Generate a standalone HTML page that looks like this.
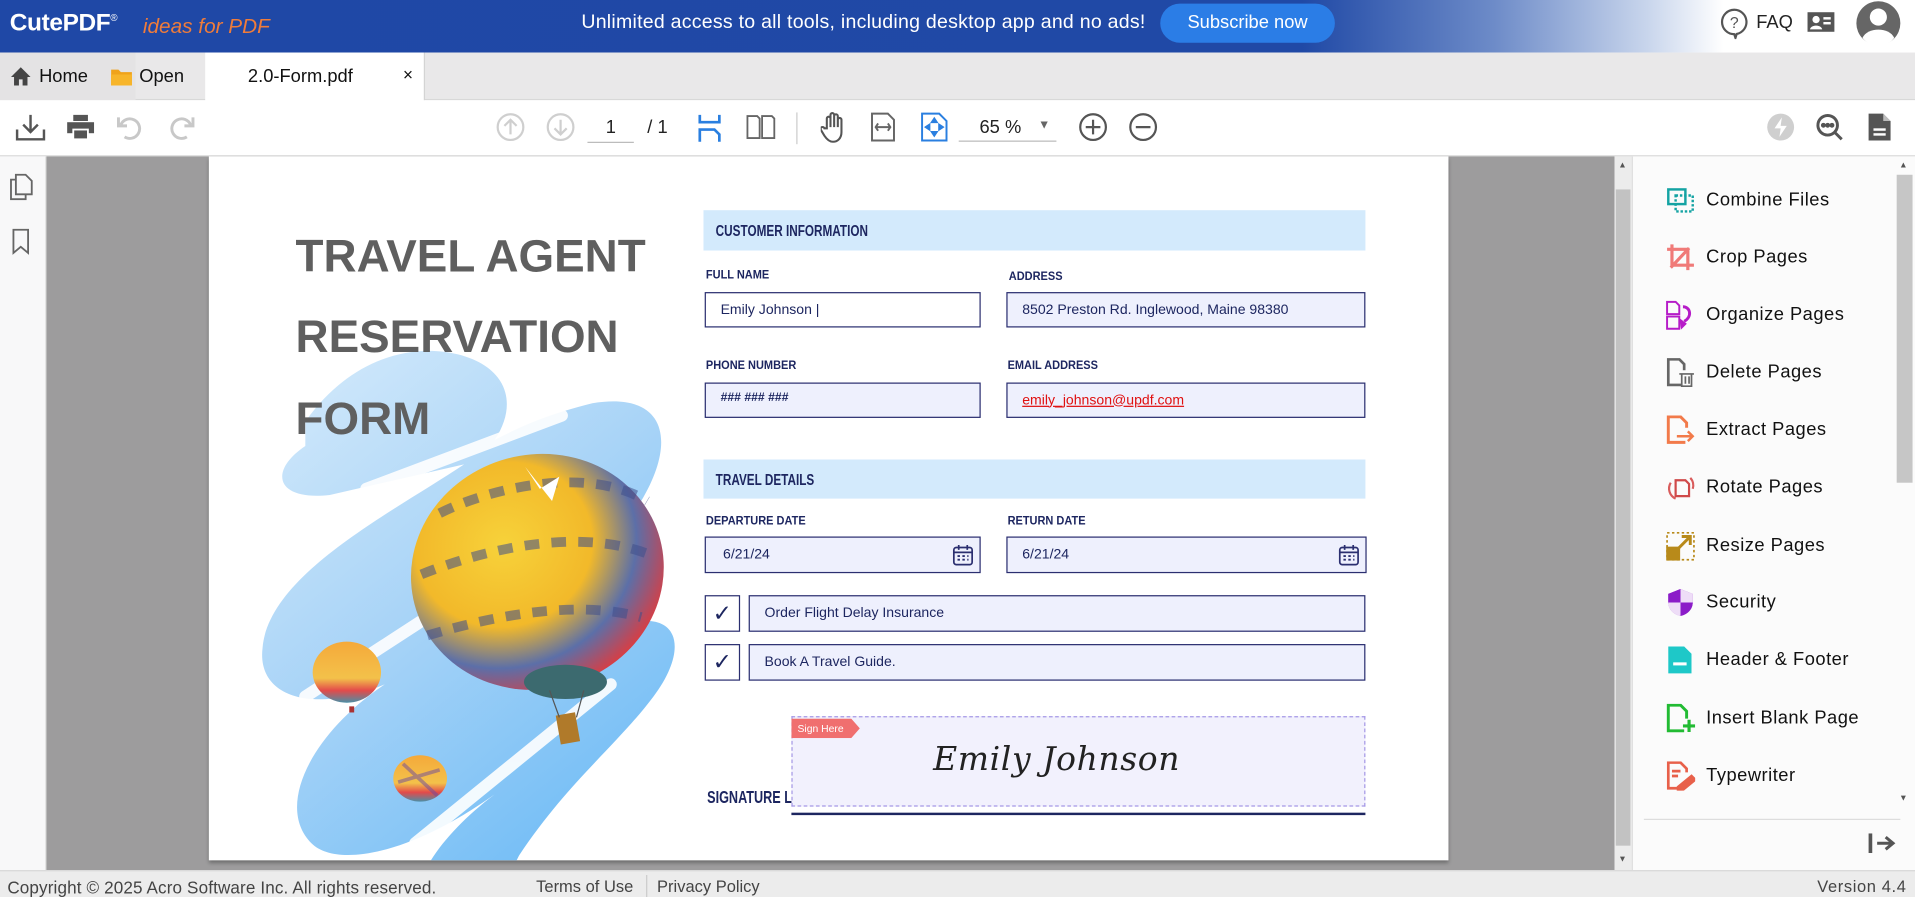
<!DOCTYPE html>
<html><head><meta charset="utf-8"><style>
*{margin:0;padding:0;box-sizing:border-box}
html,body{width:1915px;height:897px;overflow:hidden;background:#fff;font-family:"Liberation Sans",Arial,sans-serif}
#w{position:absolute;left:0;top:0;width:1568px;height:734px;transform:scale(1.22130,1.22207);transform-origin:0 0}
.a{position:absolute}
.nar{font-weight:bold;color:#1d2660}
.sx{display:inline-block;transform:scaleX(.74);transform-origin:0 50%;white-space:nowrap}
.lbl{position:absolute;font-size:10px;font-weight:bold;color:#1d2660}
.box{position:absolute;border:1.5px solid #2b2f70;background:#eef0fd;font-size:11.5px;color:#1d2660;padding-left:12px;display:flex;align-items:center}
.band{position:absolute;left:576px;width:542px;background:#d3eafc;font-size:13px;padding-left:10px;display:flex;align-items:center}
.ti{position:absolute;left:1397px;font-size:15px;color:#111;letter-spacing:.4px}
.ic{position:absolute;left:1364px;width:24px;height:24px}
</style></head><body><div id="w">

<!-- header -->
<div class="a" style="left:0;top:0;width:1568px;height:43px;background:linear-gradient(90deg,#1f48a6 0%,#2049a6 68%,#6d8bc8 78%,#c8d5ec 86%,#fff 90%,#fff 100%)"></div>
<div class="a" style="left:8px;top:8px;color:#fff;font-size:20px;font-weight:bold;letter-spacing:-.3px">CutePDF<sup style="font-size:8px;font-weight:normal">®</sup></div>
<div class="a" style="left:117px;top:12px;color:#f07c3a;font-size:17px;font-style:italic">ideas for PDF</div>
<div class="a" style="left:476px;top:10px;color:#fff;font-size:16px;letter-spacing:.2px">Unlimited access to all tools, including desktop app and no ads!</div>
<div class="a" style="left:950px;top:3px;width:143px;height:32px;border-radius:16px;background:#2b7de6;color:#fff;font-size:15px;text-align:center;line-height:32px">Subscribe now</div>
<svg class="a" style="left:1408px;top:6px" width="24" height="26" viewBox="0 0 24 26"><path d="M12 2a10 10 0 1 0 0 20l1 3 1-3.2A10 10 0 0 0 12 2z" fill="none" stroke="#555" stroke-width="1.8"/><text x="12" y="17" font-size="13" text-anchor="middle" fill="#555" font-family="Liberation Sans">?</text></svg>
<div class="a" style="left:1438px;top:10px;font-size:15px;color:#222">FAQ</div>
<svg class="a" style="left:1479px;top:9px" width="24" height="18"><rect x="1" y="1" width="22" height="16" fill="#555"/><circle cx="8" cy="7" r="3" fill="#fff"/><path d="M3 15c1-4 9-4 10 0z" fill="#fff"/><rect x="14" y="5" width="6" height="2" fill="#fff"/><rect x="14" y="9" width="6" height="2" fill="#fff"/></svg>
<svg class="a" style="left:1519px;top:0" width="38" height="38"><circle cx="19" cy="19" r="18" fill="#666"/><circle cx="19" cy="14" r="7" fill="#fff"/><path d="M6 31c4-9 22-9 26 0a16 16 0 0 1-26 0z" fill="#fff"/></svg>

<!-- tab bar -->
<div class="a" style="left:0;top:43px;width:1568px;height:39px;background:#e9e8e9;border-bottom:1px solid #d8d8d8"></div>
<div class="a" style="left:0;top:43px;width:111px;height:39px;background:#e4e3e4"></div>
<div class="a" style="left:168px;top:43px;width:180px;height:40px;background:#fff;border-right:1px solid #d4d4d4"></div>
<svg class="a" style="left:8px;top:54px" width="18" height="17"><path d="M9 1L1 9h2.5v7h4v-5h3v5h4V9H17z" fill="#444"/></svg>
<div class="a" style="left:32px;top:54px;font-size:15px;color:#111">Home</div>
<svg class="a" style="left:90px;top:55px" width="19" height="16"><path d="M1 2h6l2 2h9v11H1z" fill="#f0a31a"/><path d="M1 6h17v9H1z" fill="#f7b52a"/></svg>
<div class="a" style="left:114px;top:54px;font-size:15px;color:#111">Open</div>
<div class="a" style="left:203px;top:54px;font-size:15px;color:#111">2.0-Form.pdf</div>
<div class="a" style="left:330px;top:53px;font-size:14px;color:#111">×</div>

<!-- toolbar -->
<div class="a" style="left:0;top:82px;width:1568px;height:46px;background:#fff;border-bottom:1px solid #d9d9d9"></div>
<svg class="a" style="left:12px;top:92px" width="26" height="24" fill="none" stroke="#555" stroke-width="2"><path d="M13 2v14M7 10l6 6 6-6M2 14v8h22v-8"/></svg>
<svg class="a" style="left:54px;top:93px" width="24" height="22"><rect x="6" y="1" width="12" height="5" fill="#555"/><rect x="1" y="7" width="22" height="9" fill="#555"/><rect x="6" y="13" width="12" height="8" fill="#555" stroke="#fff" stroke-width="1.5"/></svg>
<svg class="a" style="left:95px;top:93px" width="24" height="22" fill="none" stroke="#c8c8c8" stroke-width="2.4"><path d="M4 9a8 8 0 1 1 3 10M2 3v7h7"/></svg>
<svg class="a" style="left:136px;top:93px" width="24" height="22" fill="none" stroke="#c8c8c8" stroke-width="2.4"><path d="M20 9a8 8 0 1 0-3 10M22 3v7h-7"/></svg>
<svg class="a" style="left:406px;top:92px" width="24" height="24" fill="none" stroke="#cfcfcf" stroke-width="1.8"><circle cx="12" cy="12" r="10.5"/><path d="M12 18V6M7 11l5-5 5 5"/></svg>
<svg class="a" style="left:447px;top:92px" width="24" height="24" fill="none" stroke="#cfcfcf" stroke-width="1.8"><circle cx="12" cy="12" r="10.5"/><path d="M12 6v12M7 13l5 5 5-5"/></svg>
<div class="a" style="left:481px;top:116px;width:38px;border-bottom:1px solid #bbb"></div>
<div class="a" style="left:496px;top:96px;font-size:15px;color:#222">1</div>
<div class="a" style="left:530px;top:96px;font-size:15px;color:#222">/ 1</div>
<svg class="a" style="left:571px;top:93px" width="20" height="24" fill="none" stroke="#2a7fe0" stroke-width="2.2"><path d="M2 1v6h16V1M2 23V13h12l4 4v6"/></svg>
<svg class="a" style="left:611px;top:94px" width="24" height="20" fill="none" stroke="#666" stroke-width="1.5"><path d="M1 1h8l2 2v16H1zM13 1h8l2 2v16H13z"/></svg>
<div class="a" style="left:652px;top:92px;width:1px;height:26px;background:#ccc"></div>
<svg class="a" style="left:672px;top:91px" width="22" height="26" fill="none" stroke="#555" stroke-width="1.7"><path d="M5 14V6a1.5 1.5 0 0 1 3 0v7V3a1.5 1.5 0 0 1 3 0v10V4a1.5 1.5 0 0 1 3 0v9V7a1.5 1.5 0 0 1 3 0v10c0 5-3 8-7 8-3 0-5-2-7-5l-3-5a1.5 1.5 0 0 1 3-1z"/></svg>
<svg class="a" style="left:713px;top:92px" width="20" height="24" fill="none" stroke="#666" stroke-width="1.6"><path d="M1 1h13l5 5v17H1z"/><path d="M4 12h12M6 9l-2 3 2 3M14 9l2 3-2 3"/></svg>
<svg class="a" style="left:754px;top:92px" width="22" height="24" fill="none" stroke="#2a7fe0" stroke-width="1.6"><path d="M1 1h14l6 6v16H1z"/><path d="M11 5l-2 3h4zM11 19l-2-3h4zM4 12l3-2v4zM18 12l-3-2v4z" fill="#2a7fe0"/></svg>
<div class="a" style="left:802px;top:96px;font-size:15px;color:#222">65 %</div>
<div class="a" style="left:850px;top:97px;font-size:10px;color:#666">▼</div>
<div class="a" style="left:785px;top:115px;width:80px;border-bottom:1px solid #bbb"></div>
<svg class="a" style="left:883px;top:92px" width="24" height="24" fill="none" stroke="#555" stroke-width="1.8"><circle cx="12" cy="12" r="10.5"/><path d="M12 6v12M6 12h12"/></svg>
<svg class="a" style="left:924px;top:92px" width="24" height="24" fill="none" stroke="#555" stroke-width="1.8"><circle cx="12" cy="12" r="10.5"/><path d="M6 12h12"/></svg>
<svg class="a" style="left:1446px;top:92px" width="24" height="24"><circle cx="12" cy="12" r="11" fill="#cfcfcf"/><path d="M13 4l-6 9h5l-1 7 6-9h-5z" fill="#fff"/></svg>
<svg class="a" style="left:1486px;top:92px" width="24" height="24" fill="none" stroke="#555" stroke-width="2.4"><circle cx="10.5" cy="10.5" r="8"/><path d="M16 16l6 6"/><circle cx="7" cy="10.5" r=".8" fill="#555"/><circle cx="10.5" cy="10.5" r=".8" fill="#555"/><circle cx="14" cy="10.5" r=".8" fill="#555"/></svg>
<svg class="a" style="left:1529px;top:92px" width="20" height="24"><path d="M1 1h12l6 6v16H1z" fill="#555"/><path d="M13 1v6h6" fill="#fff" opacity=".6"/><rect x="5" y="13" width="10" height="2" fill="#fff"/><rect x="5" y="17" width="10" height="2" fill="#fff"/></svg>

<!-- left sidebar -->
<div class="a" style="left:0;top:128px;width:38px;height:584px;background:#f8f8f9;border-right:1px solid #e0e0e0"></div>
<svg class="a" style="left:8px;top:142px" width="20" height="22" fill="none" stroke="#666" stroke-width="1.5"><path d="M5 1h8l5 5v11H5z"/><path d="M5 5H1v16h12v-4"/></svg>
<svg class="a" style="left:10px;top:187px" width="14" height="22" fill="none" stroke="#666" stroke-width="1.5"><path d="M1 1h12v19l-6-5-6 5z"/></svg>

<!-- viewer -->
<div class="a" style="left:38px;top:128px;width:1284px;height:584px;background:#9d9c9d"></div>
<div class="a" style="left:171px;top:128px;width:1015px;height:576px;background:#fff;box-shadow:0 2px 3px rgba(0,0,0,.3);overflow:hidden">
 <svg class="a" style="left:0;top:0" width="1015" height="576" viewBox="171 128 1015 576">
  <defs>
   <linearGradient id="bg" x1="0" y1="0" x2="0.6" y2="1"><stop offset="0" stop-color="#d6ebfb"/><stop offset=".5" stop-color="#a9d4f7"/><stop offset="1" stop-color="#72bdf6"/></linearGradient>
   <radialGradient id="bb" cx=".4" cy=".35" r=".7"><stop offset="0" stop-color="#f7d23a"/><stop offset=".5" stop-color="#f2b92a"/><stop offset=".75" stop-color="#5c6fa8"/><stop offset="1" stop-color="#e63838"/></radialGradient>
   <linearGradient id="sb" x1="0" y1="0" x2="0" y2="1"><stop offset="0" stop-color="#f5a93a"/><stop offset=".6" stop-color="#f3c14a"/><stop offset=".8" stop-color="#e34a4a"/><stop offset="1" stop-color="#4a8fa6"/></linearGradient>
  </defs>
  <path d="M250 365c-30 20-25 45 20 40l110-25c-60 40-160 90-165 150-5 40 40 55 100 30-60 40-90 100-60 130 20 20 80 10 150-40-40 30-70 70-60 90l60 0 20-40c40-60 80-90 110-130 30-40 20-70-20-60 30-40 10-60-30-40l40-60c30-50 20-90-40-80-40 10-60 20-80 30 20-30 10-60-30-70-40-10-90 5-125 55z" fill="url(#bg)"/>
  <path d="M300 400l160-60M250 570l200-130M340 690l160-130" stroke="#fff" stroke-width="10" stroke-linecap="round" opacity=".9"/>
  <ellipse cx="440" cy="468" rx="104" ry="96" fill="url(#bb)" transform="rotate(-15 440 468)"/>
  <path d="M360 420c40-20 120-40 170-10M345 470c50-20 130-40 190-15M350 520c50-15 120-30 175-15" stroke="#3f4e8a" stroke-width="8" fill="none" opacity=".55" stroke-dasharray="12 10"/>
  <path d="M430 382l12 18 16-10-6 20z" fill="#fff"/>
  <ellipse cx="463" cy="558" rx="34" ry="14" fill="#3c6a6f"/>
  <rect x="457" y="584" width="16" height="24" fill="#b07a2a" transform="rotate(-10 465 596)"/>
  <path d="M450 565l8 22M478 565l-6 22" stroke="#555" stroke-width="1"/>
  <ellipse cx="284" cy="550" rx="28" ry="25" fill="url(#sb)"/>
  <rect x="286" y="578" width="4" height="5" fill="#a33"/>
  <ellipse cx="344" cy="637" rx="22" ry="19" fill="url(#sb)"/>
  <path d="M330 625l28 26M326 640l34-10" stroke="#6b4aa0" stroke-width="3" opacity=".5"/>
  <text x="242" y="222" font-family="Liberation Sans" font-weight="bold" font-size="37.5" fill="#5f5f5f">TRAVEL AGENT</text>
  <text x="242" y="288" font-family="Liberation Sans" font-weight="bold" font-size="37.5" fill="#5f5f5f">RESERVATION</text>
  <text x="242" y="355" font-family="Liberation Sans" font-weight="bold" font-size="37.5" fill="#5f5f5f">FORM</text>
 </svg>
</div>

<!-- form -->
<div class="band nar" style="top:172px;height:33px"><span class="sx">CUSTOMER INFORMATION</span></div>
<div class="lbl" style="left:578px;top:220px"><span class="sx" style="transform:scaleX(.9)">FULL NAME</span></div>
<div class="lbl" style="left:826px;top:221px"><span class="sx" style="transform:scaleX(.9)">ADDRESS</span></div>
<div class="box" style="left:577px;top:239px;width:226px;height:29px;background:#fff">Emily Johnson |</div>
<div class="box" style="left:824px;top:239px;width:294px;height:29px">8502 Preston Rd. Inglewood, Maine 98380</div>
<div class="lbl" style="left:578px;top:294px"><span class="sx" style="transform:scaleX(.9)">PHONE NUMBER</span></div>
<div class="lbl" style="left:825px;top:294px"><span class="sx" style="transform:scaleX(.9)">EMAIL ADDRESS</span></div>
<div class="box" style="left:577px;top:313px;width:226px;height:29px;font-size:10px;font-weight:bold;padding-bottom:4px">### ### ###</div>
<div class="box" style="left:824px;top:313px;width:294px;height:29px;color:#e01010;text-decoration:underline">emily_johnson@updf.com</div>
<div class="band nar" style="top:376px;height:32px"><span class="sx">TRAVEL DETAILS</span></div>
<div class="lbl" style="left:578px;top:421px"><span class="sx" style="transform:scaleX(.9)">DEPARTURE DATE</span></div>
<div class="lbl" style="left:825px;top:421px"><span class="sx" style="transform:scaleX(.9)">RETURN DATE</span></div>
<div class="box" style="left:577px;top:439px;width:226px;height:30px;padding-left:14px">6/21/24</div>
<div class="box" style="left:824px;top:439px;width:295px;height:30px">6/21/24</div>
<svg class="a" style="left:780px;top:445px" width="17" height="18" fill="none" stroke="#2b2f70" stroke-width="1.4"><rect x="1" y="3" width="15" height="14" rx="2"/><path d="M1 7h15M5 1v4M12 1v4"/><path d="M4 10h2M8 10h2M12 10h1M4 13h2M8 13h2M12 13h1" stroke-width="1.6"/></svg>
<svg class="a" style="left:1096px;top:445px" width="17" height="18" fill="none" stroke="#2b2f70" stroke-width="1.4"><rect x="1" y="3" width="15" height="14" rx="2"/><path d="M1 7h15M5 1v4M12 1v4"/><path d="M4 10h2M8 10h2M12 10h1M4 13h2M8 13h2M12 13h1" stroke-width="1.6"/></svg>
<div class="box" style="left:577px;top:487px;width:29px;height:30px;background:#fff;padding:0;justify-content:center;font-size:19px">✓</div>
<div class="box" style="left:613px;top:487px;width:505px;height:30px">Order Flight Delay Insurance</div>
<div class="box" style="left:577px;top:527px;width:29px;height:30px;background:#fff;padding:0;justify-content:center;font-size:19px">✓</div>
<div class="box" style="left:613px;top:527px;width:505px;height:30px">Book A Travel Guide.</div>
<div class="a nar" style="left:579px;top:644px;font-size:14px"><span class="sx">SIGNATURE L</span></div>
<div class="a" style="left:648px;top:665px;width:470px;height:1.5px;background:#1d2660"></div>
<div class="a" style="left:648px;top:586px;width:470px;height:74px;border:1px dashed #a598e6;background:rgba(240,238,253,.85)"></div>
<svg class="a" style="left:648px;top:588px" width="58" height="16"><path d="M0 0h49l7 8-7 8H0z" fill="#f06f6f"/><text x="5" y="11" font-size="8.5" fill="#fff" font-family="Liberation Sans">Sign Here</text></svg>
<div class="a" style="left:764px;top:606px;font-family:'DejaVu Serif',serif;font-style:italic;font-size:27px;color:#222;letter-spacing:.5px;font-weight:lighter">Emily Johnson</div>

<!-- scrollbar -->
<div class="a" style="left:1322px;top:128px;width:14px;height:584px;background:#ececec"></div>
<div class="a" style="left:1323px;top:155px;width:12px;height:537px;background:#c2c2c2"></div>
<div class="a" style="left:1325px;top:132px;font-size:7px;color:#555">▲</div>
<div class="a" style="left:1325px;top:700px;font-size:7px;color:#555">▼</div>

<!-- right panel -->
<div class="a" style="left:1336px;top:128px;width:232px;height:584px;background:#fbfbfb;border-left:1px solid #ddd"></div>
<div class="a" style="left:1553px;top:143px;width:13px;height:252px;background:#c6c6c6"></div>
<div class="a" style="left:1555px;top:132px;font-size:7px;color:#555">▲</div>
<div class="a" style="left:1555px;top:650px;font-size:7px;color:#555">▼</div>
<div class="a" style="left:1346px;top:670px;width:210px;height:1px;background:#ddd"></div>
<svg class="a" style="left:1529px;top:681px" width="24" height="18"><rect x="1" y="1" width="3" height="16" fill="#555"/><path d="M8 9h12M15 4l6 5-6 5" stroke="#555" stroke-width="2.5" fill="none"/></svg>

<svg class="ic" style="top:152px" fill="none" stroke="#14a3a3" stroke-width="2"><rect x="2" y="3" width="14" height="12"/><rect x="8" y="8" width="14" height="13" stroke-dasharray="2 1.5"/></svg>
<div class="ti" style="top:155px">Combine Files</div>
<svg class="ic" style="top:199px" fill="none" stroke="#f07a78" stroke-width="2.6"><path d="M5 1v17h18M1 5h17v17M4 20L19 4"/></svg>
<div class="ti" style="top:202px">Crop Pages</div>
<svg class="ic" style="top:246px" fill="none" stroke="#b61cc8" stroke-width="1.6"><path d="M1 1h7l3 3v7H1zM1 13h10v10H1z"/><path d="M14 5c6 0 8 8 1 12" stroke-width="2.4"/><path d="M12 16l4 3-3 3z" fill="#b61cc8"/></svg>
<div class="ti" style="top:249px">Organize Pages</div>
<svg class="ic" style="top:293px" fill="none" stroke="#666" stroke-width="2.2"><path d="M13 22H2V1h9l4 4v5"/><path d="M11 13h12M13 13v10h8V13M16 15v6M19 15v6" stroke-width="1.4"/></svg>
<div class="ti" style="top:296px">Delete Pages</div>
<svg class="ic" style="top:340px" fill="none" stroke="#f27a4a" stroke-width="2.4"><path d="M16 22H2V1h10l5 5v4"/><path d="M9 17h13M18 13l4 4-4 4" stroke-width="2"/></svg>
<div class="ti" style="top:343px">Extract Pages</div>
<svg class="ic" style="top:387px" fill="none" stroke="#d95c5c" stroke-width="1.8"><path d="M8 6h8l3 3v10H8z" stroke="#d04a4a"/><path d="M4 8a9 9 0 0 0 4 13M20 4a9 9 0 0 1 2 9"/></svg>
<div class="ti" style="top:390px">Rotate Pages</div>
<svg class="ic" style="top:435px" fill="none" stroke="#b88a1a" stroke-width="1.4"><rect x="1" y="1" width="22" height="22" stroke-dasharray="2 2"/><rect x="1" y="13" width="10" height="10" fill="#b88a1a"/><path d="M9 15l10-10M13 4h7v7" stroke-width="2.4"/></svg>
<div class="ti" style="top:438px">Resize Pages</div>
<svg class="ic" style="top:481px"><path d="M12 1l10 4v7c0 6-5 10-10 11C7 22 2 18 2 12V5z" fill="#8b1cc8"/><path d="M12 1v22C7 22 2 18 2 12h10zM12 12h10V5l-10-4z" fill="#fff" opacity=".85"/><path d="M12 1L2 5v7h10zM12 12v11c5-1 10-5 10-11z" fill="#8b1cc8"/></svg>
<div class="ti" style="top:484px">Security</div>
<svg class="ic" style="top:528px"><path d="M2 1h13l6 6v16H2z" fill="#1ec8c8"/><rect x="6" y="14" width="11" height="2.5" fill="#fff"/></svg>
<div class="ti" style="top:531px">Header &amp; Footer</div>
<svg class="ic" style="top:576px" fill="none" stroke="#22bb33" stroke-width="2.4"><path d="M15 22H2V1h10l5 5v6"/><path d="M19 13v10M14 18h10" stroke-width="2.6"/></svg>
<div class="ti" style="top:579px">Insert Blank Page</div>
<svg class="ic" style="top:623px" fill="none" stroke="#e8604a" stroke-width="2.2"><path d="M14 22H2V1h10l5 5v3M5 8h7M5 12h5"/><path d="M10 21l11-9 3 3-11 9h-3z" fill="#e8604a"/></svg>
<div class="ti" style="top:626px">Typewriter</div>

<!-- footer -->
<div class="a" style="left:0;top:712px;width:1568px;height:22px;background:#ececec;border-top:1px solid #d8d8d8"></div>
<div class="a" style="left:6px;top:718px;font-size:14px;color:#444;letter-spacing:.1px">Copyright © 2025 Acro Software Inc. All rights reserved.</div>
<div class="a" style="left:439px;top:718px;font-size:13.5px;color:#444">Terms of Use</div>
<div class="a" style="left:529px;top:716px;width:1px;height:18px;background:#ccc"></div>
<div class="a" style="left:538px;top:718px;font-size:13.5px;color:#444">Privacy Policy</div>
<div class="a" style="left:1488px;top:718px;font-size:13.5px;color:#444;letter-spacing:.5px">Version 4.4</div>

</div></body></html>
